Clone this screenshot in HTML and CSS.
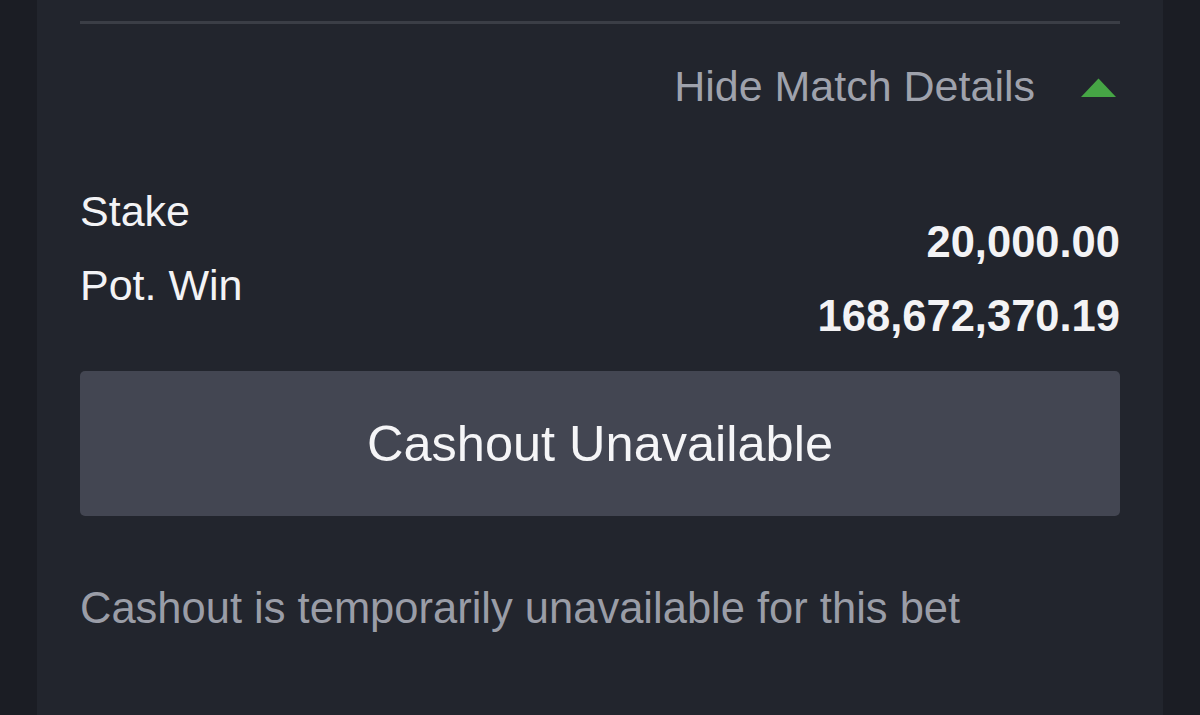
FILE: index.html
```html
<!DOCTYPE html>
<html lang="en">
<head>
<meta charset="utf-8">
<title>Bet details</title>
<link rel="stylesheet" href="styles.css">
</head>
<body>
<div class="card">
  <div class="divider"></div>
  <div class="toggle-row">
    <span class="toggle-label">Hide Match Details</span>
    <svg class="caret" width="40" height="20" viewBox="0 0 40 20" aria-hidden="true">
      <polygon points="1,19 18.5,0.5 36,19" fill="#46a545"/>
    </svg>
  </div>
  <div class="summary">
    <div class="labels">
      <div class="line">Stake</div>
      <div class="line">Pot. Win</div>
    </div>
    <div class="values">
      <div class="line">20,000.00</div>
      <div class="line">168,672,370.19</div>
    </div>
  </div>
  <div class="cashout-btn">Cashout Unavailable</div>
  <p class="note">Cashout is temporarily unavailable for this bet</p>
</div>
</body>
</html>
```

FILE: styles.css
```css
html, body {
  margin: 0;
  padding: 0;
}
body {
  background: #1b1d24;
  font-family: "Liberation Sans", Arial, sans-serif;
  height: 715px;
  overflow: hidden;
}
.card {
  margin: 0 37px;
  padding: 21px 43px 0;
  background: #22252d;
  height: 715px;
  box-sizing: border-box;
}
.divider {
  height: 3px;
  background: #3b3e46;
}
.toggle-row {
  margin-top: 37px;
  display: flex;
  justify-content: flex-end;
  align-items: center;
  gap: 45px;
}
.toggle-label {
  font-size: 43px;
  line-height: 50px;
  color: #9fa2ac;
}
.caret {
  display: block;
  margin-top: 3px;
}
.summary {
  margin-top: 63px;
  display: flex;
  justify-content: space-between;
  align-items: flex-start;
}
.line {
  font-size: 43px;
  line-height: 74px;
}
.labels {
  color: #f3f3f5;
}
.values {
  padding-top: 31px;
  text-align: right;
  font-weight: bold;
  color: #f3f3f5;
}
.values .line {
  font-size: 43.5px;
}
.cashout-btn {
  margin-top: 18px;
  height: 145px;
  border-radius: 5px;
  background: #434652;
  color: #f5f5f7;
  font-size: 50.5px;
  line-height: 50px;
  display: flex;
  align-items: center;
  justify-content: center;
}
.note {
  margin: 67px 0 0;
  font-size: 43.5px;
  line-height: 50px;
  color: #9a9da7;
}
```
